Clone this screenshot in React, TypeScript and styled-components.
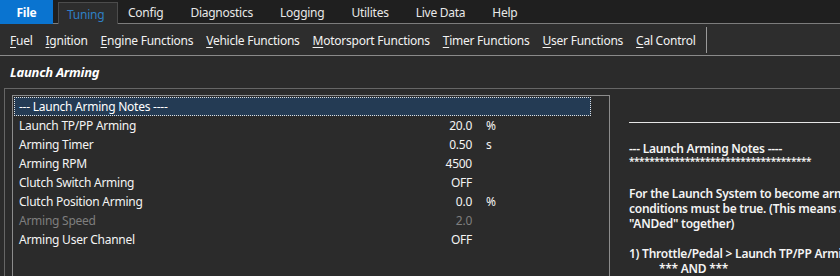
import { createGlobalStyle, styled } from 'styled-components';

const GlobalStyle = createGlobalStyle`
  html, body {
    margin: 0;
    padding: 0;
    background: #2b2b2b;
    overflow: hidden;
  }
  body {
    font-family: 'Noto Sans', 'Open Sans', sans-serif;
    font-size: 12px;
    letter-spacing: -0.25px;
    color: #f2f2f2;
  }
`;

type Row = { label: string; value: string; unit?: string; disabled?: boolean };

const rows: Row[] = [
  { label: 'Launch TP/PP Arming', value: '20.0', unit: '%' },
  { label: 'Arming Timer', value: '0.50', unit: 's' },
  { label: 'Arming RPM', value: '4500' },
  { label: 'Clutch Switch Arming', value: 'OFF' },
  { label: 'Clutch Position Arming', value: '0.0', unit: '%' },
  { label: 'Arming Speed', value: '2.0', disabled: true },
  { label: 'Arming User Channel', value: 'OFF' },
];

const tabs = ['Config', 'Diagnostics', 'Logging', 'Utilites', 'Live Data', 'Help'];

const menu: [string, string][] = [
  ['F', 'uel'],
  ['I', 'gnition'],
  ['E', 'ngine Functions'],
  ['V', 'ehicle Functions'],
  ['M', 'otorsport Functions'],
  ['T', 'imer Functions'],
  ['U', 'ser Functions'],
  ['C', 'al Control'],
];

const App = () => {
  return (
    <>
      <GlobalStyle />
      <TabBar>
        <FileButton>File</FileButton>
        <ActiveTab>Tuning</ActiveTab>
        <TabList>
          {tabs.map((t) => (
            <Tab key={t}>{t}</Tab>
          ))}
        </TabList>
      </TabBar>
      <Toolbar>
        {menu.map(([k, rest]) => (
          <MenuItem key={k + rest}>
            <u>{k}</u>
            {rest}
          </MenuItem>
        ))}
        <ToolbarSep />
      </Toolbar>
      <Title>Launch Arming</Title>
      <Frame>
        <Grid>
          <SelectedRow>--- Launch Arming Notes ----</SelectedRow>
          {rows.map((r) => (
            <GridRow key={r.label} $disabled={r.disabled}>
              <span>{r.label}</span>
              <Value>{r.value}</Value>
              <Unit>{r.unit}</Unit>
            </GridRow>
          ))}
        </Grid>
        <Notes>
          <NotesRule />
          <NoteLine>--- Launch Arming Notes ----</NoteLine>
          <Stars>************************************</Stars>
          <NoteGap $h={19} />
          <NoteLine>For the Launch System to become armed, all of the following</NoteLine>
          <NoteLine>conditions must be true. (This means all conditions are</NoteLine>
          <NoteLine>"ANDed" together)</NoteLine>
          <NoteGap $h={15} />
          <NoteLine>1) Throttle/Pedal &gt; Launch TP/PP Arming</NoteLine>
          <NoteLine $indent>*** AND ***</NoteLine>
        </Notes>
      </Frame>
    </>
  );
};

export default App;

const TabBar = styled.div`
  display: flex;
  align-items: stretch;
  height: 24px;
  background: #1f1f1f;
  border-bottom: 1px solid #7c7c7c;
  box-sizing: border-box;
  white-space: nowrap;
`;

const FileButton = styled.div`
  width: 53px;
  margin-bottom: -1px;
  padding-top: 1px;
  background: #0a74d0;
  color: #ffffff;
  font-weight: 700;
  display: flex;
  align-items: center;
  justify-content: center;
`;

const ActiveTab = styled.div`
  margin: 2px 0 -1px 5px;
  width: 60px;
  box-sizing: border-box;
  padding: 1px 0 0 8px;
  background: #2d2d2d;
  border: 1px solid #4c4c4c;
  border-bottom: none;
  color: #2f7fc4;
  display: flex;
  align-items: center;
`;

const TabList = styled.div`
  display: flex;
  gap: 27px;
  padding-left: 10px;
`;

const Tab = styled.div`
  display: flex;
  align-items: center;
  padding-top: 2px;
  color: #e8e8e8;
`;

const Toolbar = styled.div`
  display: flex;
  align-items: center;
  gap: 13px;
  height: 32px;
  padding: 2px 0 0 10px;
  background: #2d2d2d;
  border-bottom: 1px solid #8a8a8a;
  box-sizing: border-box;
  white-space: nowrap;
`;

const MenuItem = styled.div`
  color: #f2f2f2;
  & u {
    text-underline-offset: 2px;
  }
`;

const ToolbarSep = styled.div`
  width: 1px;
  height: 26px;
  margin: -2px 0 0 -3px;
  background: #9a9a9a;
`;

const Title = styled.div`
  height: 32px;
  padding-left: 10px;
  display: flex;
  align-items: center;
  font-weight: 700;
  font-style: italic;
  font-size: 13px;
  color: #ffffff;
`;

const Frame = styled.div`
  display: flex;
  margin-left: 4px;
  padding: 6px 0 0 7px;
  border-top: 1px solid #666666;
  border-left: 1px solid #666666;
  height: 200px;
  box-sizing: border-box;
`;

const Grid = styled.div`
  width: 598px;
  flex-shrink: 0;
  border: 1px solid #8c8c8c;
  border-bottom: none;
  padding: 1px 18px 0 1px;
  box-sizing: border-box;
`;

const SelectedRow = styled.div`
  height: 19px;
  box-sizing: border-box;
  padding-left: 4px;
  display: flex;
  align-items: center;
  background: #243b54;
  border: 1px dotted #e0e0e0;
  color: #ffffff;
`;

const GridRow = styled.div<{ $disabled?: boolean }>`
  height: 19px;
  display: grid;
  grid-template-columns: 373px 80px 40px;
  align-items: center;
  padding-left: 5px;
  color: ${(p) => (p.$disabled ? '#7e7e7e' : '#f4f4f4')};
`;

const Value = styled.span`
  text-align: right;
`;

const Unit = styled.span`
  padding-left: 14px;
`;

const Notes = styled.div`
  flex: 1;
  padding: 27px 0 0 19px;
  white-space: nowrap;
  overflow: hidden;
  font-weight: 600;
  color: #f4f4f4;
`;

const NotesRule = styled.div`
  height: 1px;
  background: #e6e6e6;
  margin-bottom: 18px;
  margin-right: -20px;
`;

const NoteLine = styled.div<{ $indent?: boolean }>`
  line-height: 15px;
  padding-left: ${(p) => (p.$indent ? '30px' : '0')};
`;

const Stars = styled.div`
  line-height: 11px;
  font-size: 10px;
  letter-spacing: -0.4px;
`;

const NoteGap = styled.div<{ $h: number }>`
  height: ${(p) => p.$h}px;
`;
